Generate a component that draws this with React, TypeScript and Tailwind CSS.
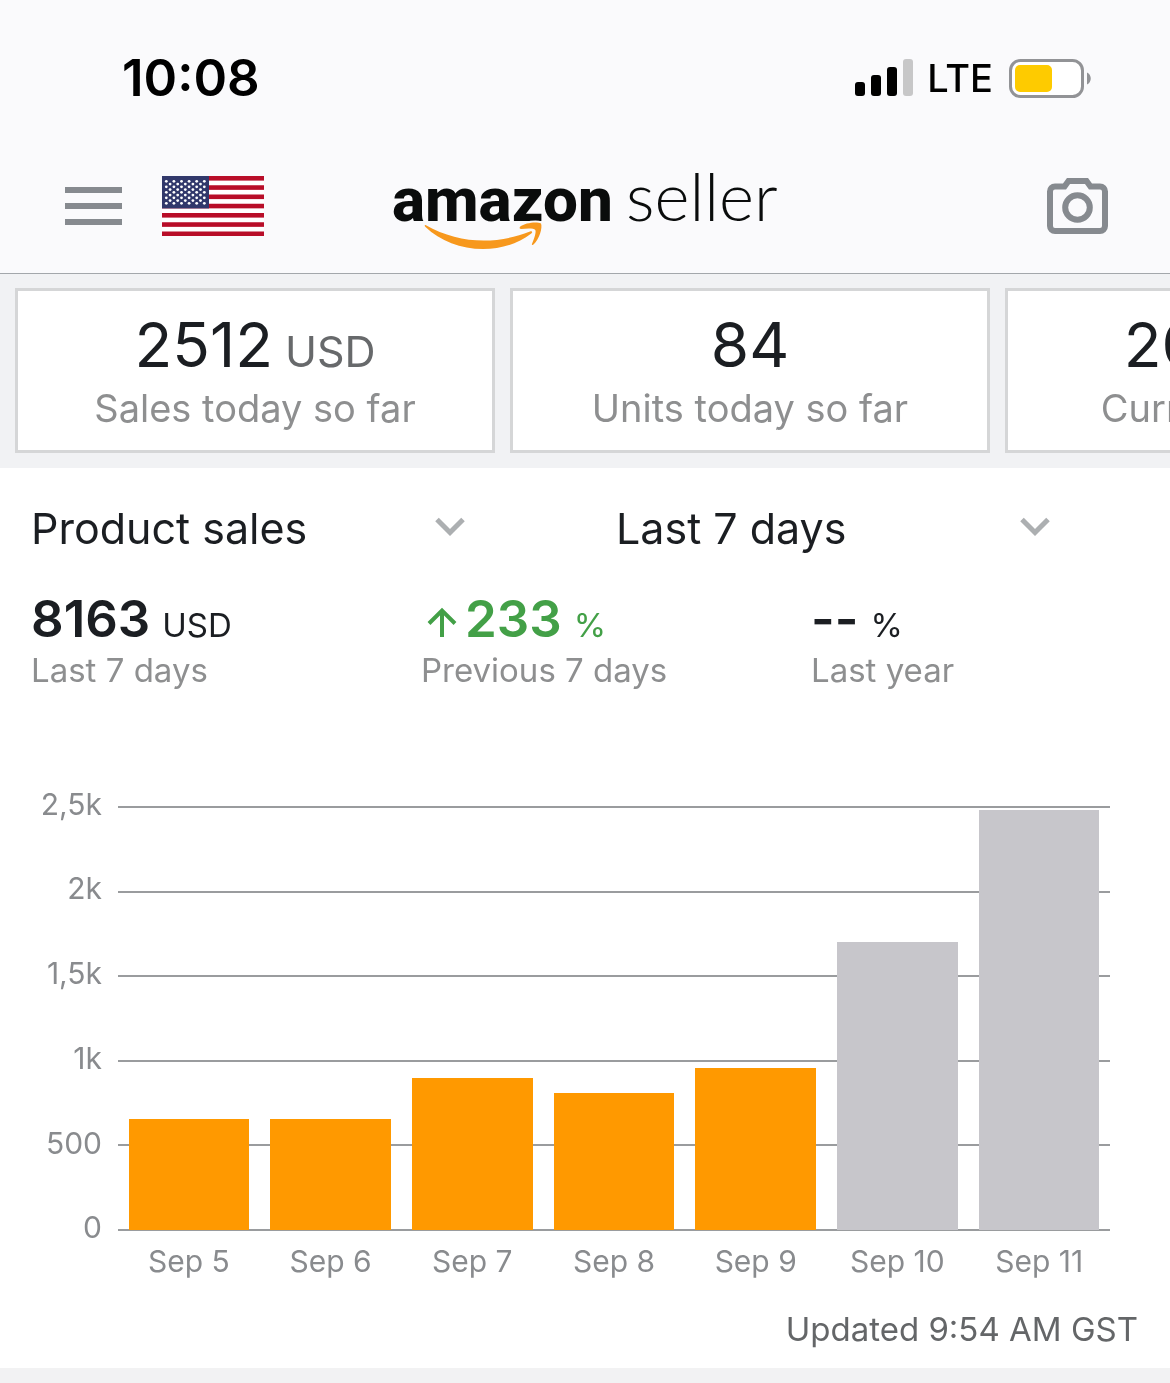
import type { ReactNode } from "react";

const summaryCards = [
  { value: "2512", unit: "USD", label: "Sales today so far" },
  { value: "84", unit: "", label: "Units today so far" },
  { value: "2015", unit: "USD", label: "Current balance" },
];

const ticks = ["2,5k", "2k", "1,5k", "1k", "500", "0"];
const maxValue = 2500;

const sales = [
  { day: "Sep 5", value: 654, settled: true },
  { day: "Sep 6", value: 654, settled: true },
  { day: "Sep 7", value: 896, settled: true },
  { day: "Sep 8", value: 805, settled: true },
  { day: "Sep 9", value: 955, settled: true },
  { day: "Sep 10", value: 1701, settled: false },
  { day: "Sep 11", value: 2476, settled: false },
];

function StatusBar() {
  return (
    <div className="flex items-center justify-between pt-[53px] pl-[122px] pr-[78px] text-black">
      <span className="text-[51px] leading-[50px] font-semibold">10:08</span>
      <div className="flex items-center">
        <svg width="58" height="38" viewBox="0 0 58 38" aria-hidden="true">
          <rect x="0" y="23" width="10" height="14" rx="3" />
          <rect x="16" y="16" width="10" height="21" rx="3" />
          <rect x="32" y="8" width="10" height="29" rx="3" />
          <rect x="48" y="0" width="10" height="37" rx="3" fill="#c7c7c8" />
        </svg>
        <span className="ml-3.5 text-[38px] leading-[50px] font-medium">LTE</span>
        <svg className="ml-4" width="83" height="39" viewBox="0 0 83 39" aria-hidden="true">
          <rect x="1.5" y="1.5" width="72" height="36" rx="10" fill="#fff" stroke="#929396" strokeWidth="3" />
          <rect x="6" y="6" width="37" height="27" rx="5" fill="#fecb00" />
          <path d="M78 13.500c5 2 5 10 0 12z" fill="#929396" />
        </svg>
      </div>
    </div>
  );
}

function Flag() {
  const stars: ReactNode[] = [];
  for (let row = 0; row < 9; row++) {
    const count = row % 2 === 0 ? 6 : 5;
    for (let i = 0; i < count; i++) {
      stars.push(
        <circle key={`${row}-${i}`} cx={4.300 + i * 7.600 + (row % 2) * 3.800} cy={5.300 + row * 2.750} r="1.4" />
      );
    }
  }
  return (
    <svg width="102" height="60" viewBox="0 0 102 60" role="img" aria-label="United States">
      <rect width="102" height="60" fill="#fff" />
      {[0, 1, 2, 3, 4, 5, 6].map((i) => (
        <rect key={i} y={i * 9.250} width="102" height="4.6" fill="#b80d28" />
      ))}
      <rect width="47" height="32.4" fill="#31386b" />
      <g fill="#fff">{stars}</g>
    </svg>
  );
}

function Logo() {
  return (
    <svg width="382" height="88" viewBox="0 -4 382 88" role="img" aria-label="amazon seller" className="overflow-visible">
      <text x="-2" y="55" fontSize="62" fontWeight="800" fill="#0a0c0c" className="font-['Roboto',sans-serif]">
        amazon
      </text>
      <text x="232" y="55" fontSize="67" fontWeight="300" fill="#0a0c0c" className="font-['Lato',sans-serif]">
        seller
      </text>
      <g fill="#f7981d" stroke="#fafafc" strokeWidth="4" paintOrder="stroke">
        <path d="M31.500 59C65 78 102 79 136 65.500c2-.6 3 .7 1.300 2C124 78 107 83 89 83 67 83 46 75 31.500 61c-1.200-1.200-.9-2.400 0-2z" />
        <path d="M126 60.700c5-4 17-5.500 21-3.200 1.700 4-1.500 15.500-7.500 21-1 .8-2 .4-1.500-.8 2-4.500 4.500-11.700 3.300-13.700-1.400-2-9-1.500-14-1-1.600.1-2.200-1-1.300-2.300z" />
      </g>
    </svg>
  );
}

function NavBar() {
  return (
    <nav className="grid grid-cols-[1fr_auto_1fr] items-center px-[62px] pt-[59px] pb-[23px]">
      <div className="flex items-center gap-10 pl-[3px]">
        <button type="button" aria-label="Menu">
          <svg width="57" height="38" viewBox="0 0 57 38" fill="#868a8f">
            <rect width="57" height="6" />
            <rect y="16" width="57" height="6" />
            <rect y="32" width="57" height="6" />
          </svg>
        </button>
        <button type="button" aria-label="Marketplace">
          <Flag />
        </button>
      </div>
      <Logo />
      <button type="button" aria-label="Scan product" className="justify-self-end">
        <svg width="61" height="56" viewBox="0 0 61 56" fill="none" stroke="#868a8f" strokeWidth="6">
          <path d="M8 8.500h9.500l4-5.500h18l4 5.500H53a5 5 0 0 1 5 5v34.500a5 5 0 0 1-5 5H8a5 5 0 0 1-5-5V13.500a5 5 0 0 1 5-5z" />
          <circle cx="30.500" cy="29.500" r="12.300" />
        </svg>
      </button>
    </nav>
  );
}

function SummaryCards() {
  return (
    <div className="flex gap-[15px] overflow-x-auto bg-[#f1f2f4] px-[15px] pt-[14px] pb-[15px] [scrollbar-width:none]">
      {summaryCards.map((card) => (
        <div
          key={card.label}
          className="w-[480px] shrink-0 border-3 border-[#d5d6d7] bg-white pt-[22px] pb-[18px] text-center"
        >
          <p className="flex items-baseline justify-center gap-3 text-[62px] leading-[64px] text-[#1b1e22]">
            {card.value}
            {card.unit && <span className="text-[43px] leading-none text-[#67696b]">{card.unit}</span>}
          </p>
          <p className="mt-[7px] text-[38px] leading-[48px] text-[#8e8f90]">{card.label}</p>
        </div>
      ))}
    </div>
  );
}

function Picker({ label, options }: { label: string; options: string[] }) {
  return (
    <div className="relative pl-[31px] pr-[120px]">
      <select
        aria-label={label}
        className="h-[60px] w-full appearance-none bg-transparent text-[43px] leading-[60px] text-[#1b1e22]"
      >
        {options.map((option) => (
          <option key={option}>{option}</option>
        ))}
      </select>
      <svg
        className="pointer-events-none absolute top-[19px] right-[120px]"
        width="30"
        height="20"
        viewBox="0 0 30 20"
        fill="none"
        stroke="#acafb1"
        strokeWidth="5"
      >
        <path d="M2 2.500l13 13 13-13" />
      </svg>
    </div>
  );
}

type StatProps = {
  value: string;
  unit: string;
  label: string;
  up?: boolean;
};

function Stat({ value, unit, label, up }: StatProps) {
  return (
    <div className="pl-[31px]">
      <p className={`flex items-baseline text-[51px] leading-[50px] ${up ? "text-[#43a047]" : "text-[#1b1e22]"}`}>
        {up && (
          <svg className="mr-2 ml-1.5" width="30" height="30" viewBox="0 0 30 30" fill="none" stroke="currentColor" strokeWidth="4">
            <path d="M15 30V3M2 16.500l13-13 13 13" />
          </svg>
        )}
        <span className="font-semibold">{value}</span>
        <span className="ml-3 text-[33px] leading-none">{unit}</span>
      </p>
      <p className="mt-1.5 text-[33px] leading-[40px] text-[#8e8f90]">{label}</p>
    </div>
  );
}

function SalesChart() {
  return (
    <div className="mt-[116px] grid grid-cols-[102px_1fr] gap-x-4 pr-[60px] text-[30px] text-[#898b8e]">
      <div className="-mt-0.5 flex h-[424px] flex-col justify-between">
        {ticks.map((tick) => (
          <span key={tick} className="flex h-0 items-center justify-end">
            {tick}
          </span>
        ))}
      </div>

      <div className="grid h-[425px]">
        <div className="col-start-1 row-start-1 flex flex-col justify-between">
          {ticks.map((tick) => (
            <div key={tick} className="h-0.5 bg-[#9a9c9e]" />
          ))}
        </div>
        <div className="col-start-1 row-start-1 grid grid-cols-7 items-end pb-px">
          {sales.map((bar) => (
            <div
              key={bar.day}
              className={`w-[85%] justify-self-center ${bar.settled ? "bg-[#ff9900]" : "bg-[#c7c6cb]"}`}
              style={{ height: `${(bar.value / maxValue) * 100}%` }}
            />
          ))}
        </div>
      </div>

      <div className="col-start-2 mt-2.5 grid grid-cols-7 text-center leading-[40px]">
        {sales.map((bar) => (
          <span key={bar.day}>{bar.day}</span>
        ))}
      </div>
    </div>
  );
}

export default function App() {
  return (
    <div className="min-h-screen bg-[#f2f2f3] font-['Inter',sans-serif]">
      <header className="border-b border-[#a3a7ab] bg-[#fafafc]">
        <StatusBar />
        <NavBar />
      </header>

      <main>
        <SummaryCards />

        <section className="bg-white pt-[30px] pb-[19px]">
          <div className="grid grid-cols-2">
            <Picker label="Metric" options={["Product sales", "Units ordered"]} />
            <Picker label="Period" options={["Last 7 days", "Last 30 days"]} />
          </div>

          <div className="mt-9 grid grid-cols-3">
            <Stat value="8163" unit="USD" label="Last 7 days" />
            <Stat value="233" unit="%" label="Previous 7 days" up />
            <Stat value="--" unit="%" label="Last year" />
          </div>

          <SalesChart />

          <p className="mt-7 pr-8 text-right text-[33px] leading-[40px] text-[#646668]">Updated 9:54 AM GST</p>
        </section>
      </main>
    </div>
  );
}
